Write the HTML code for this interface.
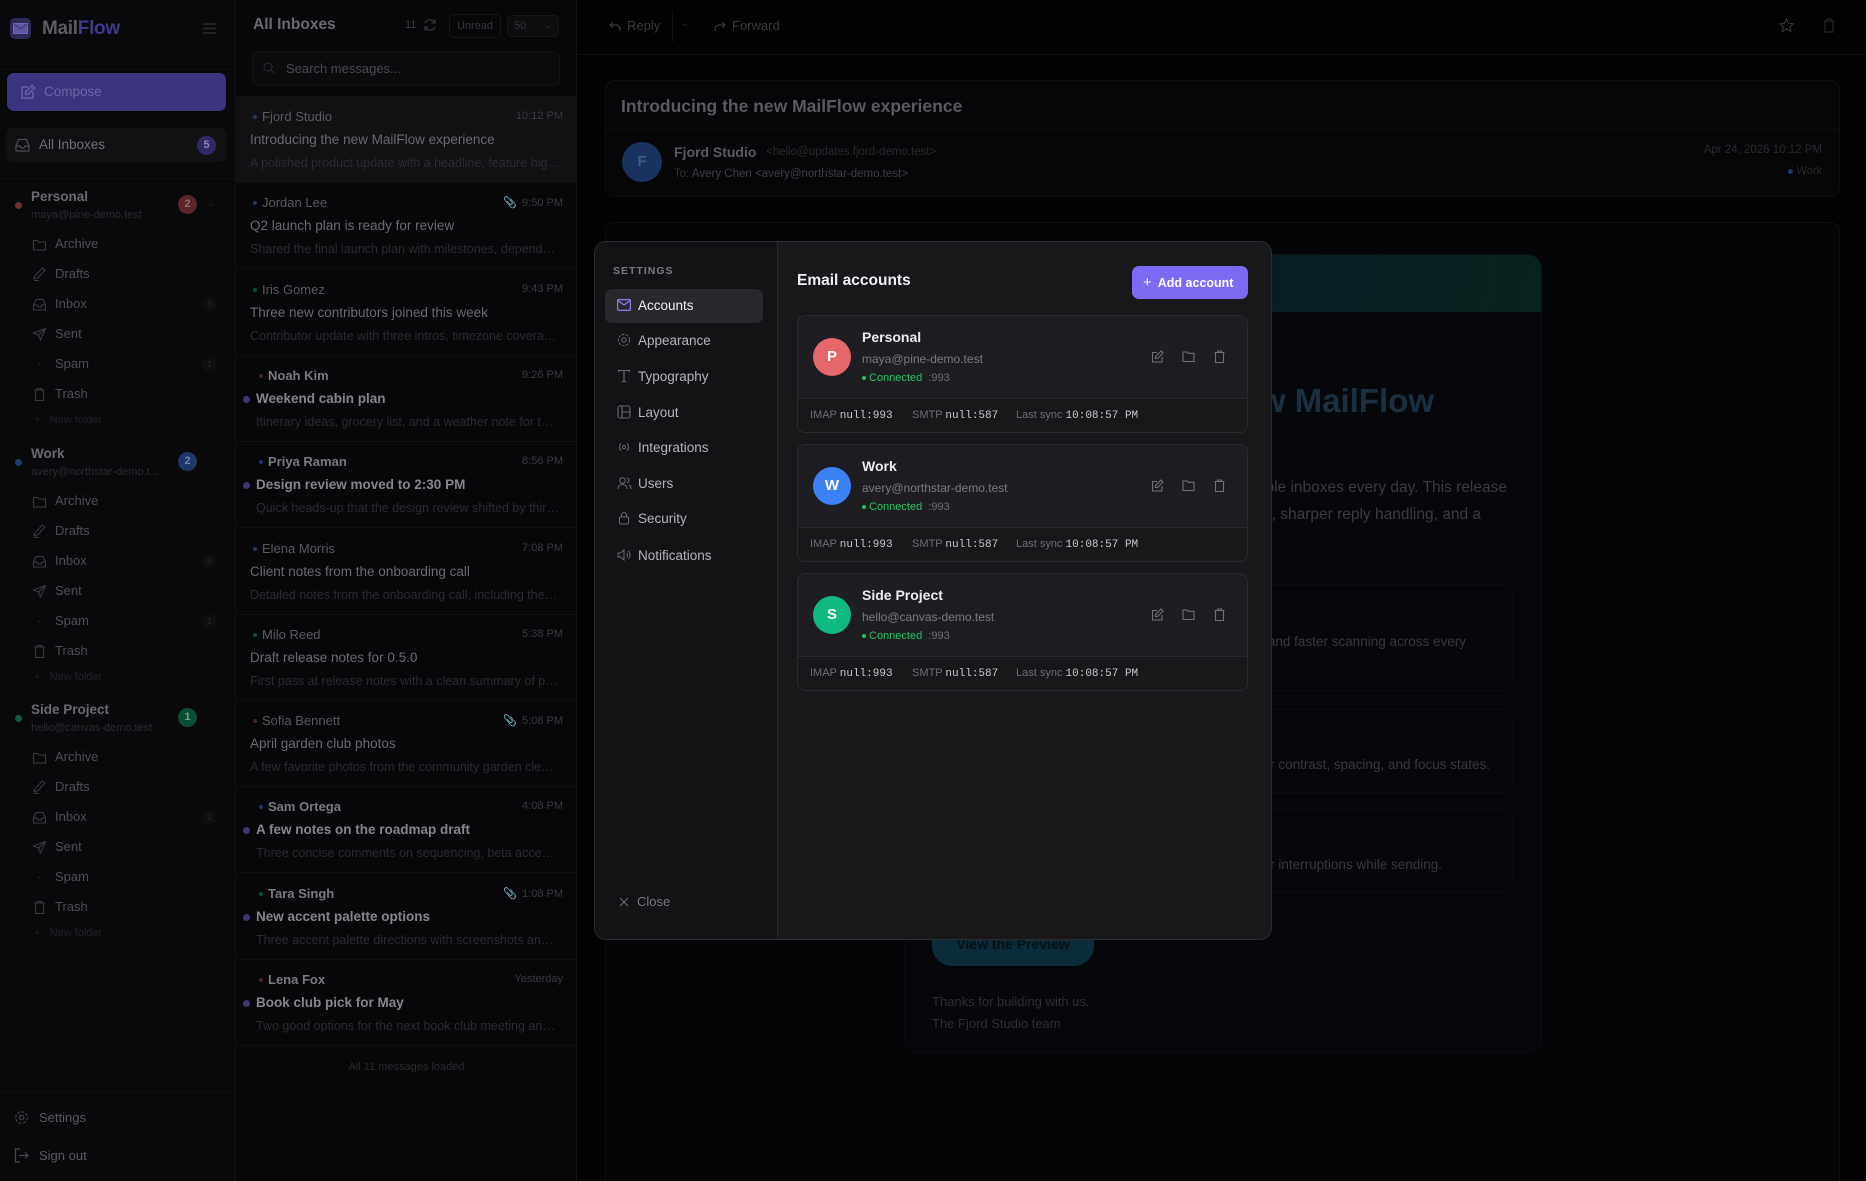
<!DOCTYPE html>
<html style="overflow:hidden;width:1866px;height:1181px"><head><meta charset="utf-8"><style>
*{box-sizing:border-box;margin:0;padding:0}
body{width:1866px;height:1181px;background:#030304;font-family:"Liberation Sans",sans-serif;position:relative;overflow:hidden}
.a{position:absolute;white-space:nowrap}
svg{display:block}
.sb{left:0;top:0;width:236px;height:1181px;background:#09090b;border-right:1px solid #111114}
.fold{font-size:13px;color:#4e4e54}
.ml{left:236px;top:0;width:341px;height:1181px;background:#070709;border-right:1px solid #111114}
.it{position:absolute;left:0;width:341px;height:86px;border-bottom:1px solid #101013}
.snd{position:absolute;left:26px;top:12px;font-size:13px;color:#5a5a60}
.snd.b{left:32px;font-weight:bold;color:#7a7a80}
.snd i{position:absolute;left:-9px;top:6px;width:4px;height:4px;border-radius:50%}
.tm{position:absolute;right:14px;top:13px;font-size:11px;color:#3a3a3f}
.sub{position:absolute;left:14px;top:35px;font-size:13.5px;color:#6a6a70}
.sub.b{left:20px;font-weight:bold;color:#86868c}
.ud{position:absolute;left:-13px;top:5px;width:7px;height:7px;border-radius:50%;background:#3d3577}
.pv{position:absolute;left:14px;top:59px;font-size:12.5px;color:#2b2b30;width:310px;overflow:hidden;text-overflow:ellipsis}
.pv.b{left:20px;width:304px}
.modal{left:594px;top:241px;width:678px;height:699px;background:#18181b;border:1px solid #2c2c31;border-radius:12px;overflow:hidden}
.nav{position:absolute;left:0;top:0;width:183px;height:100%;background:#131316;border-right:1px solid #26262a}
.ni{position:absolute;left:10px;width:158px;height:34px;border-radius:7px;font-size:13.5px;color:#b4b4ba}
.ni svg{position:absolute;left:12px;top:10px}
.ni span{position:absolute;left:33px;top:9px}
.card{position:absolute;left:202px;width:451px;height:118px;border:1px solid #2a2a2f;border-radius:8px;overflow:hidden;background:#1e1e22}
.card .bt{position:absolute;left:0;bottom:0;width:100%;height:34px;background:#18181b;border-top:1px solid #29292d;font-size:11px;color:#6d6d74}
.card .bt b{font-family:"Liberation Mono",monospace;font-weight:normal;color:#c8c8cc;font-size:11px}
.av{position:absolute;left:15px;top:22px;width:38px;height:38px;border-radius:50%;color:#fff;font-weight:bold;font-size:15px;text-align:center;line-height:38px}
.nm{position:absolute;left:64px;top:13px;font-size:14px;font-weight:bold;color:#ececf0}
.em{position:absolute;left:64px;top:36px;font-size:12px;color:#7a7a82}
.cn{position:absolute;left:64px;top:56px;font-size:11px;color:#22c55e}
.cn i{display:inline-block;width:4px;height:4px;border-radius:50%;background:#22c55e;margin-right:3px;vertical-align:middle}
.cn span{color:#6d6d74}
.ic{position:absolute;top:34px}
</style></head><body>

<div class="a sb">
 <div class="a" style="left:10px;top:18px;width:21px;height:21px;border-radius:5px;background:#2d2a55"></div>
 <svg class="a" style="left:13px;top:23px" width="15" height="11"><rect x=".5" y=".5" width="14" height="10" fill="#5b57a0" stroke="#6d68b8"/><path d="M1 1l6.5 5 6.5-5" stroke="#3a3670" fill="none"/></svg>
 <div class="a" style="left:42px;top:18px;font-size:19px;font-weight:bold;color:#5c5c62;letter-spacing:-.3px">Mail<span style="color:#3f3a8c">Flow</span></div>
 <svg class="a" style="left:203px;top:23px" width="13" height="11"><path d="M0 1h13M0 5.5h13M0 10h13" stroke="#2a2a2e" stroke-width="1.5"/></svg>
 <div class="a" style="left:0;top:69px;width:236px;height:1px;background:#111114"></div>
 <div class="a" style="left:7px;top:73px;width:219px;height:38px;border-radius:7px;background:#3a3380"></div>
 <svg class="a" style="left:20px;top:84px" width="16" height="16"><path d="M13 8v6H2V3h6M12 1.5l2.5 2.5L8 10.5H5.5V8z" stroke="#6e68a8" fill="none" stroke-width="1.3"/></svg>
 <div class="a" style="left:44px;top:84px;font-size:13.5px;color:#6e68a8">Compose</div>
 <div class="a" style="left:6px;top:128px;width:221px;height:34px;border-radius:7px;background:#111113"></div>
 <svg class="a" style="left:15px;top:138px" width="15" height="14"><path d="M1 8l2.5-6.5h8L14 8v5H1zM1 8h4l1 2h3l1-2h4" stroke="#4e4e54" fill="none" stroke-width="1.2"/></svg>
 <div class="a" style="left:39px;top:137px;font-size:13.5px;color:#707076">All Inboxes</div>
 <div class="a" style="left:197px;top:136px;width:19px;height:19px;border-radius:50%;background:#2f2a66;color:#8a85c0;font-size:11px;text-align:center;line-height:19px;font-weight:bold">5</div>
 <div class="a" style="left:0;top:178px;width:236px;height:1px;background:#0f0f12"></div>

 <div class="a" style="left:15px;top:202px;width:7px;height:7px;border-radius:50%;background:#6b2f31"></div>
 <div class="a" style="left:31px;top:189px;font-size:13.5px;font-weight:bold;color:#6a6a70">Personal</div>
 <div class="a" style="left:31px;top:209px;font-size:11px;color:#2b2b30">maya@pine-demo.test</div>
 <div class="a" style="left:178px;top:195px;width:19px;height:19px;border-radius:50%;background:#5a2628;color:#9a6a6a;font-size:11px;text-align:center;line-height:19px;font-weight:bold">2</div>
 <div class="a" style="left:207px;top:198px;font-size:9px;color:#252528">⌄</div>

 <div class="a" style="left:15px;top:459px;width:7px;height:7px;border-radius:50%;background:#233b6a"></div>
 <div class="a" style="left:31px;top:446px;font-size:13.5px;font-weight:bold;color:#6a6a70">Work</div>
 <div class="a" style="left:31px;top:466px;font-size:11px;color:#2b2b30">avery@northstar-demo.t...</div>
 <div class="a" style="left:178px;top:452px;width:19px;height:19px;border-radius:50%;background:#1f3768;color:#6a85b8;font-size:11px;text-align:center;line-height:19px;font-weight:bold">2</div>

 <div class="a" style="left:15px;top:715px;width:7px;height:7px;border-radius:50%;background:#0f5a3c"></div>
 <div class="a" style="left:31px;top:702px;font-size:13.5px;font-weight:bold;color:#6a6a70">Side Project</div>
 <div class="a" style="left:31px;top:722px;font-size:11px;color:#2b2b30">hello@canvas-demo.test</div>
 <div class="a" style="left:178px;top:708px;width:19px;height:19px;border-radius:50%;background:#0e4d35;color:#6aa88a;font-size:11px;text-align:center;line-height:19px;font-weight:bold">1</div>

 <div class="a" style="left:0;top:1092px;width:236px;height:1px;background:#111114"></div>
 <svg class="a" style="left:14px;top:1110px" width="15" height="15"><circle cx="7.5" cy="7.5" r="2.3" stroke="#4a4a50" fill="none"/><circle cx="7.5" cy="7.5" r="5.8" stroke="#4a4a50" fill="none" stroke-dasharray="3 1.5"/></svg>
 <div class="a" style="left:39px;top:1110px;font-size:13px;color:#5a5a60">Settings</div>
 <svg class="a" style="left:14px;top:1148px" width="15" height="15"><path d="M6 1H1.5v13H6M5 7.5h9M11 4.5l3 3-3 3" stroke="#4a4a50" fill="none" stroke-width="1.2"/></svg>
 <div class="a" style="left:39px;top:1148px;font-size:13px;color:#5a5a60">Sign out</div>
</div>

<div id="folders"></div>

<div class="a ml">
 <div class="a" style="left:17px;top:16px;font-size:15.5px;font-weight:bold;color:#6a6a70">All Inboxes</div>
 <div class="a" style="left:169px;top:19px;font-size:11px;color:#3a3a3f">11</div>
 <svg class="a" style="left:187px;top:18px" width="14" height="14"><path d="M12 5A5.5 5.5 0 002 5M2 9a5.5 5.5 0 0010 0M12 1.5V5H8.5M2 12.5V9h3.5" stroke="#3a3a3f" fill="none" stroke-width="1.2"/></svg>
 <div class="a" style="left:213px;top:14px;width:52px;height:24px;border:1px solid #17171a;border-radius:5px;font-size:11px;color:#36363b;text-align:center;line-height:22px">Unread</div>
 <div class="a" style="left:271px;top:15px;width:52px;height:22px;border:1px solid #17171a;border-radius:5px;background:#0d0d0f;font-size:11px;color:#36363b;line-height:20px;padding-left:6px">50<span style="position:absolute;right:6px;font-size:8px">⌄</span></div>
 <div class="a" style="left:16px;top:51px;width:308px;height:35px;border:1px solid #141417;border-radius:7px;background:#0b0b0d"></div>
 <svg class="a" style="left:27px;top:62px" width="12" height="12"><circle cx="5" cy="5" r="4" stroke="#2f2f34" fill="none"/><path d="M8 8l3 3" stroke="#2f2f34"/></svg>
 <div class="a" style="left:50px;top:61px;font-size:13px;color:#4a4a50">Search messages...</div>
 <div class="a" style="left:0;top:96px;width:341px;height:1px;background:#0f0f12"></div>
 <div id="items"></div>
 <div class="a" style="left:0;top:1061px;width:341px;text-align:center;font-size:11px;color:#2a2a2e">All 11 messages loaded</div>
</div>

<div class="a" style="left:577px;top:0;width:1289px;height:55px;border-bottom:1px solid #0f0f12;background:#020203"></div>
<svg class="a" style="left:609px;top:20px" width="12" height="12"><path d="M4 2L1 5l3 3M1 5h6a4 4 0 014 4v2" stroke="#3a3a3f" fill="none" stroke-width="1.2"/></svg>
<div class="a" style="left:627px;top:18px;font-size:13px;color:#3a3a3f">Reply</div>
<div class="a" style="left:672px;top:10px;width:1px;height:32px;background:#111114"></div>
<div class="a" style="left:681px;top:18px;font-size:9px;color:#2a2a2e">⌄</div>
<svg class="a" style="left:714px;top:20px" width="12" height="12"><path d="M8 2l3 3-3 3M11 5H5a4 4 0 00-4 4v2" stroke="#3a3a3f" fill="none" stroke-width="1.2"/></svg>
<div class="a" style="left:732px;top:18px;font-size:13px;color:#3a3a3f">Forward</div>
<svg class="a" style="left:1779px;top:18px" width="15" height="15"><path d="M7.5 1l2 4.3 4.6.5-3.4 3.1 1 4.6-4.2-2.4-4.2 2.4 1-4.6L.9 5.8l4.6-.5z" stroke="#3a3a3f" fill="none"/></svg>
<svg class="a" style="left:1823px;top:18px" width="12" height="15"><path d="M1 3h10M4 3V1h4v2M2 3v11h8V3" stroke="#2e2e33" fill="none"/></svg>

<div class="a" style="left:605px;top:80px;width:1235px;height:117px;border:1px solid #0f0f12;border-radius:10px;background:#060608"></div>
<div class="a" style="left:621px;top:96px;font-size:17.5px;font-weight:bold;color:#5a5a60">Introducing the new MailFlow experience</div>
<div class="a" style="left:606px;top:129px;width:1233px;height:1px;background:#0e0e11"></div>
<div class="a" style="left:622px;top:142px;width:40px;height:40px;border-radius:50%;background:#1a3260;color:#4a5a80;text-align:center;line-height:40px;font-size:15px;font-weight:bold">F</div>
<div class="a" style="left:674px;top:144px;font-size:14px;font-weight:bold;color:#5a5a60">Fjord Studio</div>
<div class="a" style="left:766px;top:146px;font-size:11.5px;color:#2a2a2e">&lt;hello@updates.fjord-demo.test&gt;</div>
<div class="a" style="left:674px;top:168px;font-size:11.5px;color:#303035">To: <span style="color:#3e3e44">Avery Chen &lt;avery@northstar-demo.test&gt;</span></div>
<div class="a" style="right:44px;top:144px;font-size:11.5px;color:#2a2a2e">Apr 24, 2026 10:12 PM</div>
<div class="a" style="right:44px;top:165px;font-size:11px;color:#2a2a2e"><span style="display:inline-block;width:5px;height:5px;border-radius:50%;background:#1f3768;margin-right:4px;vertical-align:middle"></span>Work</div>

<div class="a" style="left:605px;top:222px;width:1235px;height:959px;border:1px solid #0f0f12;border-bottom:none;border-radius:10px 10px 0 0;background:#040507"></div>
<div class="a" style="left:904px;top:254px;width:638px;height:799px;border:1px solid #0c0e12;border-radius:14px;background:#05070a;overflow:hidden">
 <div style="height:57px;background:linear-gradient(100deg,#061620,#071e22 70%,#06221c)"></div>
</div>
<div class="a" style="right:432px;top:382px;font-size:33px;font-weight:bold;color:#1a3040">Meet the new MailFlow</div>
<div class="a" style="right:359px;top:479px;font-size:15.5px;color:#3a3a40">Built for people who manage multiple inboxes every day. This release</div>
<div class="a" style="right:385px;top:506px;font-size:15.5px;color:#3a3a40">brings a calmer layout, sharper reply handling, and a</div>
<div class="a" style="left:932px;top:584px;width:581px;height:107px;border:1px solid #0c0d10;border-radius:10px;background:#06070a"></div>
<div class="a" style="right:400px;top:634px;font-size:13.5px;color:#38383e">Cleaner message lists and faster scanning across every</div>
<div class="a" style="left:932px;top:709px;width:581px;height:84px;border:1px solid #0c0d10;border-radius:10px;background:#06070a"></div>
<div class="a" style="right:376px;top:757px;font-size:13.5px;color:#38383e">Better contrast, spacing, and focus states.</div>
<div class="a" style="left:932px;top:809px;width:581px;height:84px;border:1px solid #0c0d10;border-radius:10px;background:#06070a"></div>
<div class="a" style="right:424px;top:857px;font-size:13.5px;color:#38383e">Fewer interruptions while sending.</div>
<div class="a" style="left:932px;top:922px;width:162px;height:44px;border-radius:20px;background:#0b2c38;color:#041218;font-weight:bold;font-size:14px;text-align:center;line-height:44px">View the Preview</div>
<div class="a" style="left:932px;top:994px;font-size:13px;color:#2e2e33">Thanks for building with us.</div>
<div class="a" style="left:932px;top:1016px;font-size:13px;color:#2e2e33">The Fjord Studio team</div>

<div class="a modal">
 <div class="nav">
  <div class="a" style="left:18px;top:23px;font-size:10.5px;letter-spacing:1px;color:#7a7a82;font-weight:bold">SETTINGS</div>
  <div class="ni" style="top:47px;background:#28282d;color:#f0f0f4"><svg width="14" height="12"><rect x=".6" y=".6" width="12.8" height="10.8" rx="1" stroke="#8b7cf6" fill="none" stroke-width="1.2"/><path d="M1 1.5l6 4.5 6-4.5" stroke="#8b7cf6" fill="none" stroke-width="1.2"/></svg><span>Accounts</span></div>
  <div class="ni" style="top:82px"><svg width="14" height="14" style="top:9px"><circle cx="7" cy="7" r="2.2" stroke="#6a6a72" fill="none"/><circle cx="7" cy="7" r="5.6" stroke="#6a6a72" fill="none" stroke-dasharray="2.6 1.4"/></svg><span>Appearance</span></div>
  <div class="ni" style="top:118px"><svg width="14" height="14" style="top:9px"><path d="M1.5 3V1.5h11V3M7 1.5v11M5 12.5h4" stroke="#6a6a72" fill="none" stroke-width="1.1"/></svg><span>Typography</span></div>
  <div class="ni" style="top:154px"><svg width="14" height="14" style="top:9px"><rect x="1" y="1" width="12" height="12" rx="2" stroke="#6a6a72" fill="none" stroke-width="1.1"/><path d="M5 1v12M5 7h8" stroke="#6a6a72" stroke-width="1.1"/></svg><span>Layout</span></div>
  <div class="ni" style="top:189px"><svg width="14" height="14" style="top:9px"><circle cx="7" cy="7" r="1.6" stroke="#6a6a72" fill="none"/><path d="M4 3.5a5 5 0 000 7M10 3.5a5 5 0 010 7" stroke="#6a6a72" fill="none"/></svg><span>Integrations</span></div>
  <div class="ni" style="top:225px"><svg width="15" height="14" style="top:9px"><circle cx="5.5" cy="4.5" r="2.8" stroke="#6a6a72" fill="none"/><path d="M1 13c0-3 2-4.5 4.5-4.5S10 10 10 13M10 2a2.6 2.6 0 010 5M12 9c1.3.6 2 2 2 4" stroke="#6a6a72" fill="none"/></svg><span>Users</span></div>
  <div class="ni" style="top:260px"><svg width="14" height="14" style="top:9px"><rect x="2.5" y="6" width="9" height="7" rx="1" stroke="#6a6a72" fill="none"/><path d="M4.5 6V4a2.5 2.5 0 015 0v2" stroke="#6a6a72" fill="none"/></svg><span>Security</span></div>
  <div class="ni" style="top:297px"><svg width="14" height="14" style="top:9px"><path d="M1 5h2.5L7 2v10L3.5 9H1zM9.5 5a2.5 2.5 0 010 4M11 3a5 5 0 010 8" stroke="#6a6a72" fill="none"/></svg><span>Notifications</span></div>
  <svg class="a" style="left:24px;top:655px" width="10" height="10"><path d="M1 1l8 8M9 1L1 9" stroke="#6a6a72" stroke-width="1.2"/></svg>
  <div class="a" style="left:42px;top:652px;font-size:13px;color:#7a7a82">Close</div>
 </div>
 <div class="a" style="left:202px;top:30px;font-size:15.5px;font-weight:bold;color:#f0f0f4">Email accounts</div>
 <div class="a" style="left:537px;top:24px;width:116px;height:33px;border-radius:7px;background:#7c6af5;color:#fff;font-size:12.5px;font-weight:bold;line-height:33px;padding-left:11px"><span style="font-size:15px;font-weight:normal;margin-right:6px">+</span>Add account</div>
 <div id="cards"></div>
</div>

<script>
(function(){
var icons={
Archive:'<path d="M1.5 3.5h4l1.5 1.5h6.5v8h-12z" stroke="#3a3a40" fill="none" stroke-width="1.1"/>',
Drafts:'<path d="M2 12l1-3.5 7.5-7.5 2.5 2.5L5.5 11zM2 13.5h5" stroke="#3a3a40" fill="none" stroke-width="1.1"/>',
Inbox:'<path d="M1.5 8L4 2.5h7L13.5 8v5h-12zM1.5 8h3.5l1 2h3l1-2h3.5" stroke="#3a3a40" fill="none" stroke-width="1.1"/>',
Sent:'<path d="M13.5 1.5L1.5 6l5 2 2 5z M13.5 1.5L6.5 8" stroke="#3a3a40" fill="none" stroke-width="1.1"/>',
Spam:'<circle cx="7.5" cy="7.5" r=".8" fill="#2a2a2e"/>',
Trash:'<path d="M2.5 3h10M5.5 3V1.5h4V3M3.5 3v10.5h8V3" stroke="#3a3a40" fill="none" stroke-width="1.1"/>'};
var groups=[[244,{Inbox:3,Spam:1}],[501,{Inbox:6,Spam:1}],[757,{Inbox:2}]];
var h='';var names=['Archive','Drafts','Inbox','Sent','Spam','Trash'];
groups.forEach(function(g){names.forEach(function(n,i){var y=g[0]+i*30;
h+='<svg class="a" style="left:32px;top:'+(y-7)+'px" width="15" height="15">'+icons[n]+'</svg>';
h+='<div class="a fold" style="left:55px;top:'+(y-8)+'px">'+n+'</div>';
if(g[1][n])h+='<div class="a" style="left:202px;top:'+(y-7)+'px;width:15px;height:15px;border-radius:50%;background:#0e0e10;color:#26262a;font-size:9px;text-align:center;line-height:15px">'+g[1][n]+'</div>';});
var y=g[0]+178;h+='<div class="a" style="left:34px;top:'+(y-8)+'px;font-size:11px;color:#222226">+&nbsp;&nbsp; New folder</div>';});
document.getElementById('folders').innerHTML=h;

var it=[['Fjord Studio','10:12 PM','Introducing the new MailFlow experience','A polished product update with a headline, feature highlights and a call to action',0,'#1f3768',0],
['Jordan Lee','9:50 PM','Q2 launch plan is ready for review','Shared the final launch plan with milestones, dependencies and owners',0,'#1f3768',1],
['Iris Gomez','9:43 PM','Three new contributors joined this week','Contributor update with three intros, timezone coverage and more',0,'#0e4d35',0],
['Noah Kim','9:26 PM','Weekend cabin plan','Itinerary ideas, grocery list, and a weather note for the trip',1,'#4a2224',0],
['Priya Raman','8:56 PM','Design review moved to 2:30 PM','Quick heads-up that the design review shifted by thirty minutes',1,'#1f3768',0],
['Elena Morris','7:08 PM','Client notes from the onboarding call','Detailed notes from the onboarding call, including the next steps',0,'#1f3768',0],
['Milo Reed','5:38 PM','Draft release notes for 0.5.0','First pass at release notes with a clean summary of polish items',0,'#0e4d35',0],
['Sofia Bennett','5:08 PM','April garden club photos','A few favorite photos from the community garden cleanup day',0,'#4a2224',1],
['Sam Ortega','4:08 PM','A few notes on the roadmap draft','Three concise comments on sequencing, beta access and timing',1,'#1f3768',0],
['Tara Singh','1:08 PM','New accent palette options','Three accent palette directions with screenshots and notes',1,'#0e4d35',1],
['Lena Fox','Yesterday','Book club pick for May','Two good options for the next book club meeting and a poll',1,'#4a2224',0]];
var s='';it.forEach(function(m,i){var top=97+i*86.3;var b=m[4]?' b':'';
s+='<div class="it" style="top:'+top+'px;'+(i==0?'background:#111113;':'')+'">';
s+='<div class="snd'+b+'"><i style="background:'+m[5]+'"></i>'+m[0]+'</div>';
s+='<div class="tm">'+(m[6]?'<span style="margin-right:5px">&#128206;</span>':'')+m[1]+'</div>';
s+='<div class="sub'+b+'">'+(m[4]?'<span class="ud"></span>':'')+m[2]+'</div>';
s+='<div class="pv'+b+'">'+m[3]+'</div></div>';});
document.getElementById('items').innerHTML=s;

var ac=[['Personal','maya@pine-demo.test','#e5676a','P'],['Work','avery@northstar-demo.test','#3b82f6','W'],['Side Project','hello@canvas-demo.test','#10b981','S']];
var c='';ac.forEach(function(a,i){var top=73+i*129;
c+='<div class="card" style="top:'+top+'px"><div class="av" style="background:'+a[2]+'">'+a[3]+'</div>';
c+='<div class="nm">'+a[0]+'</div><div class="em">'+a[1]+'</div><div class="cn"><i></i>Connected&nbsp; <span>:993</span></div>';
c+='<svg class="ic" style="left:353px" width="13" height="13"><path d="M11 7v5H1.5V2.5H6M10 1l2 2-5.5 5.5H4.5V6.5z" stroke="#707078" fill="none" stroke-width="1.1"/></svg>';
c+='<svg class="ic" style="left:384px" width="13" height="13"><path d="M1 2h4l1.3 1.3H12V11.5H1z" stroke="#707078" fill="none" stroke-width="1.1"/></svg>';
c+='<svg class="ic" style="left:416px" width="11" height="13"><path d="M.5 2.5h10M3.5 2.5V1h4v1.5M1.5 2.5v10h8v-10" stroke="#707078" fill="none" stroke-width="1.1"/></svg>';
c+='<div class="bt"><span class="a" style="left:12px;top:10px">IMAP <b>null:993</b></span><span class="a" style="left:114px;top:10px">SMTP <b>null:587</b></span><span class="a" style="left:218px;top:10px">Last sync <b>10:08:57 PM</b></span></div></div>';});
document.getElementById('cards').innerHTML=c;
})();
</script>
</body></html>
